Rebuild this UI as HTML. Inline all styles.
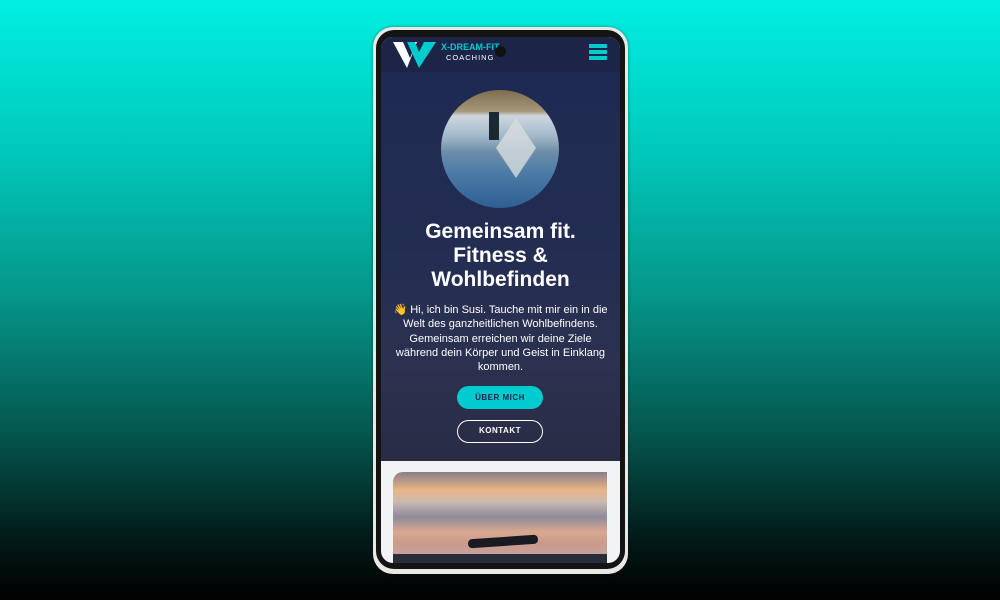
<!DOCTYPE html>
<html><head><meta charset="utf-8"><style>
*{margin:0;padding:0;box-sizing:border-box}
body{width:1000px;height:600px;overflow:hidden;position:relative;font-family:"Liberation Sans",sans-serif;
background:linear-gradient(180deg,#00efe2 0%,#00c9bb 25%,#069488 50%,#05574f 72%,#021a18 90%,#000 100%)}
.phone{position:absolute;left:373px;top:27px;width:255px;height:547px;border-radius:20px;background:#e8e8e4;box-shadow:0 0 3px rgba(0,0,0,.4)}
.bezel{position:absolute;left:376px;top:30px;width:249px;height:539px;border-radius:18px;background:#141414}
.screen{position:absolute;left:381px;top:37px;width:239px;height:526px;border-radius:12px;overflow:hidden;background:#f2f3f5}
.hdr{position:absolute;left:0;top:0;width:239px;height:35px;background:#1c2448}
.hero{position:absolute;left:0;top:35px;width:239px;height:389px;background:linear-gradient(180deg,#1e2a52 0%,#232d52 45%,#2c3150 75%,#2a2c44 100%)}
.circle{position:absolute;left:60px;top:18px;width:118px;height:118px;border-radius:50%;overflow:hidden;
background:linear-gradient(180deg,#7d6e4e 0%,#a89779 18%,#cdd7e0 22%,#9fb6c8 40%,#6f8ea8 52%,#4c7ba6 70%,#2e5f93 100%)}
h1{position:absolute;left:0;top:148px;width:239px;text-align:center;color:#fff;font-size:21px;line-height:24px;font-weight:bold}
p{position:absolute;left:10px;top:231px;width:219px;text-align:center;color:#fff;font-size:11px;line-height:14.3px}
.b1{position:absolute;left:76px;top:314px;width:86px;height:23px;border-radius:12px;background:#00ccd0;color:#1c2448;font-size:8px;font-weight:bold;text-align:center;line-height:23px;letter-spacing:.5px}
.b2{position:absolute;left:76px;top:348px;width:86px;height:23px;border-radius:12px;border:1.5px solid #fff;color:#fff;font-size:8px;font-weight:bold;text-align:center;line-height:20px;letter-spacing:.5px}
.photo{position:absolute;left:12px;top:435px;width:214px;height:100px;border-radius:10px 0 0 0;
background:linear-gradient(180deg,#8a7f8a 0%,#e9b585 18%,#c9b9b0 30%,#8f8a9b 45%,#d9a890 60%,#c99a8c 72%,#c8a4a0 85%,#7e6f78 100%)}
</style></head><body>
<div class="phone"></div><div class="bezel"></div>
<div class="screen">
 <div class="hero">
  <div class="circle"><div style="position:absolute;left:55px;top:28px;width:40px;height:60px;background:#d8dde0;clip-path:polygon(50% 0,100% 50%,50% 100%,0 50%);opacity:.8"></div>
  <div style="position:absolute;left:48px;top:22px;width:10px;height:28px;background:#1a2a30"></div></div>
  <h1>Gemeinsam fit.<br>Fitness &amp;<br>Wohlbefinden</h1>
  <p>👋 Hi, ich bin Susi. Tauche mit mir ein in die Welt des ganzheitlichen Wohlbefindens. Gemeinsam erreichen wir deine Ziele während dein Körper und Geist in Einklang kommen.</p>
  <div class="b1">ÜBER MICH</div>
  <div class="b2">KONTAKT</div>
 </div>
 <div class="hdr">
  <svg style="position:absolute;left:12px;top:3px" width="44" height="30" viewBox="0 0 44 30"><path d="M0 2h10l7 16 4-9-3-7h6l-5 13-5 13z" fill="#fff"/><path d="M14 2h8l4 10 5-10h12L26 28z" fill="#00ccd0"/></svg>
  <div style="position:absolute;left:60px;top:5px;color:#00ccd0;font-size:9px;font-weight:bold">X-DREAM-FIT</div>
  <div style="position:absolute;left:65px;top:16px;color:#fff;font-size:7.5px;letter-spacing:1px">COACHING</div>
  <div style="position:absolute;left:114px;top:9px;width:11px;height:11px;border-radius:50%;background:#111"></div>
  <div style="position:absolute;left:208px;top:7px;width:18px;height:4px;background:#00ccd0;box-shadow:0 6px 0 #00ccd0,0 12px 0 #00ccd0"></div>
 </div>
 <div class="photo"><div style="position:absolute;left:75px;top:65px;width:70px;height:9px;background:#1a1a22;border-radius:4px;transform:rotate(-4deg)"></div></div>
 <div style="position:absolute;left:12px;top:517px;width:214px;height:9px;background:#2a2d3c"></div>
</div>
</body></html>
